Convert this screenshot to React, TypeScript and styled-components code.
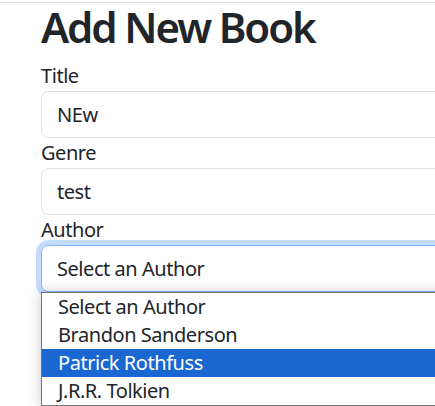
import React from "react";
import styled, { createGlobalStyle } from "styled-components";

const GlobalStyle = createGlobalStyle`
  html {
    overflow: hidden;
  }
  html, body {
    margin: 0;
    padding: 0;
    background: #ffffff;
  }
  body {
    min-height: 100vh;
    font-family: "Noto Sans", "Open Sans", sans-serif;
    color: #212529;
  }
`;

const Page = styled.div`
  min-height: 406px;
`;

const TopRule = styled.div`
  margin-top: 2px;
  border-top: 1px solid #dee2e6;
`;

const Container = styled.main`
  padding-left: 41px;
  width: 700px;
`;

const Heading = styled.h1`
  width: fit-content;
  margin: 0 0 10px;
  font-size: 42px;
  line-height: 48px;
  font-weight: 600;
  letter-spacing: -2.1px;
  color: #212529;
`;

const Field = styled.div`
  display: flex;
  flex-direction: column;
  position: relative;
`;

const Label = styled.label`
  display: block;
  width: fit-content;
  font-size: 20px;
  line-height: 30px;
  letter-spacing: -0.45px;
  color: #212529;
`;

const Input = styled.input`
  box-sizing: border-box;
  width: 100%;
  height: 47px;
  padding: 7.5px 15px;
  font-family: inherit;
  font-size: 20px;
  line-height: 30px;
  letter-spacing: -0.45px;
  color: #212529;
  background: #fff;
  border: 1px solid #dee2e6;
  border-radius: 7.5px;
  outline: none;
`;

const SelectBox = styled.div`
  box-sizing: border-box;
  width: 100%;
  height: 47px;
  padding: 7.5px 15px;
  font-size: 20px;
  line-height: 30px;
  letter-spacing: -0.45px;
  color: #212529;
  background: #fff;
  border: 1px solid #86b7fe;
  border-radius: 7.5px;
  box-shadow: 0 0 0 5px rgba(13, 110, 253, 0.25);
`;

const Dropdown = styled.ul`
  position: absolute;
  z-index: 10;
  top: 100%;
  left: 0;
  width: 600px;
  margin: 0;
  padding: 0;
  list-style: none;
  background: #fff;
  border: 1px solid #767676;
  box-shadow: 0 0 12px rgba(0, 0, 0, 0.22);
`;

const Option = styled.li<{ $active?: boolean }>`
  height: 28px;
  padding: 0 16px;
  font-size: 20px;
  line-height: 28px;
  letter-spacing: -0.45px;
  color: ${(p) => (p.$active ? "#ffffff" : "#212529")};
  background: ${(p) => (p.$active ? "#1a67d2" : "transparent")};
`;

const authors = ["Select an Author", "Brandon Sanderson", "Patrick Rothfuss", "J.R.R. Tolkien"];

export default function App() {
  return (
    <Page>
      <GlobalStyle />
      <TopRule />
      <Container>
        <Heading>Add New Book</Heading>
        <Field>
          <Label>Title</Label>
          <Input defaultValue="NEw" />
        </Field>
        <Field>
          <Label>Genre</Label>
          <Input defaultValue="test" />
        </Field>
        <Field>
          <Label>Author</Label>
          <SelectBox>Select an Author</SelectBox>
          <Dropdown>
            {authors.map((a) => (
              <Option key={a} $active={a === "Patrick Rothfuss"}>
                {a}
              </Option>
            ))}
          </Dropdown>
        </Field>
      </Container>
    </Page>
  );
}
